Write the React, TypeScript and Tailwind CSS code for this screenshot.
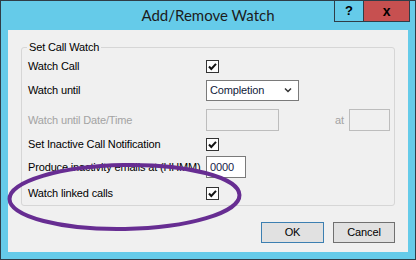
import React from 'react';

function CheckBox() {
  return (
    <div className="w-[13px] h-[13px] border border-[#333333] bg-[#fdfdfd] flex items-center justify-center">
      <svg width="11" height="11" viewBox="0 0 11 11">
        <path d="M2 5.5 L4.3 8 L9 2.8" fill="none" stroke="#111" strokeWidth="2" />
      </svg>
    </div>
  );
}

export default function App() {
  return (
    <div className="relative w-[416px] h-[260px] border border-[#2f3d47] bg-[#65cbe9] flex flex-col text-[11px] tracking-[-0.15px] text-black font-['Liberation_Sans',sans-serif] select-none">
      {/* Title bar */}
      <div className="h-[29px] grid grid-cols-[1fr_auto_1fr] items-start">
        <div />
        <div className="h-[29px] flex items-center text-[15px] tracking-normal text-[#1c1c1c] font-['Lato',sans-serif]">Add/Remove Watch</div>
        <div className="flex justify-end pr-[5px]">
          <div className="w-[29px] h-[21px] border-l border-b border-[#2f3d47] flex items-center justify-center font-bold text-[13px]">
            ?
          </div>
          <div className="w-[47px] h-[21px] border-x border-b border-[#2f3d47] bg-[#c75050] flex items-center justify-center font-bold text-[14px]">
            x
          </div>
        </div>
      </div>

      {/* Client area */}
      <div className="mx-[7px] h-[222px] bg-[#f0f0f0] flex flex-col">
        {/* Group box */}
        <div className="relative mt-[17px] mx-[13px] h-[159px] border border-[#d6d6d6] rounded-[3px] pt-[7px] pl-[6px]">
          <span className="absolute left-[5px] top-[-9px] px-[2px] leading-[16px] bg-[#f0f0f0]">Set Call Watch</span>

          <div className="h-[22px] flex items-center">
            <span className="w-[178px]">Watch Call</span>
            <CheckBox />
          </div>

          <div className="mt-[2px] h-[22px] flex items-center">
            <span className="w-[178px]">Watch until</span>
            <div className="w-[93px] h-[21px] border border-[#7a7a7a] bg-white flex items-center justify-between pl-[3px] pr-[6px]">
              <span className="text-[#101a3a]">Completion</span>
              <svg width="8" height="6" viewBox="0 0 8 6">
                <path d="M1 1.5 L4 4.5 L7 1.5" fill="none" stroke="#333" strokeWidth="1.5" />
              </svg>
            </div>
          </div>

          <div className="mt-[8px] h-[22px] flex items-center">
            <span className="w-[178px] text-[#a3a3a3]">Watch until Date/Time</span>
            <div className="w-[73px] h-[22px] border border-[#bdbdbd] bg-[#f0f0f0]" />
            <span className="ml-[56px] text-[#a3a3a3]">at</span>
            <div className="ml-[5px] w-[41px] h-[22px] border border-[#bdbdbd] bg-[#f0f0f0]" />
          </div>

          <div className="mt-[2px] h-[22px] flex items-center">
            <span className="w-[178px]">Set Inactive Call Notification</span>
            <CheckBox />
          </div>

          <div className="mt-[1px] h-[22px] flex items-center">
            <span className="w-[178px] whitespace-nowrap">Produce inactivity emails at (HHMM)</span>
            <div className="w-[40px] h-[22px] border border-[#7a7a7a] bg-white flex items-center pl-[3px] text-[#16224a]">
              0000
            </div>
          </div>

          <div className="mt-[4px] h-[22px] flex items-center">
            <span className="w-[178px]">Watch linked calls</span>
            <CheckBox />
          </div>
        </div>

        {/* Buttons */}
        <div className="mt-[16px] flex justify-end gap-[9px] pr-[13px]">
          <button className="w-[63px] h-[21px] border border-[#3c7fb1] bg-[#e1e1e1] flex items-center justify-center">OK</button>
          <button className="w-[62px] h-[21px] border border-[#707070] bg-[#e1e1e1] flex items-center justify-center">Cancel</button>
        </div>
      </div>

      {/* Purple annotation ellipse */}
      <svg className="absolute left-[-1px] top-[-1px] pointer-events-none" width="416" height="260" viewBox="0 0 416 260">
        <ellipse cx="124.5" cy="197" rx="115" ry="32" fill="none" stroke="#672d92" strokeWidth="4" transform="rotate(-1 124.5 197)" />
      </svg>
    </div>
  );
}
